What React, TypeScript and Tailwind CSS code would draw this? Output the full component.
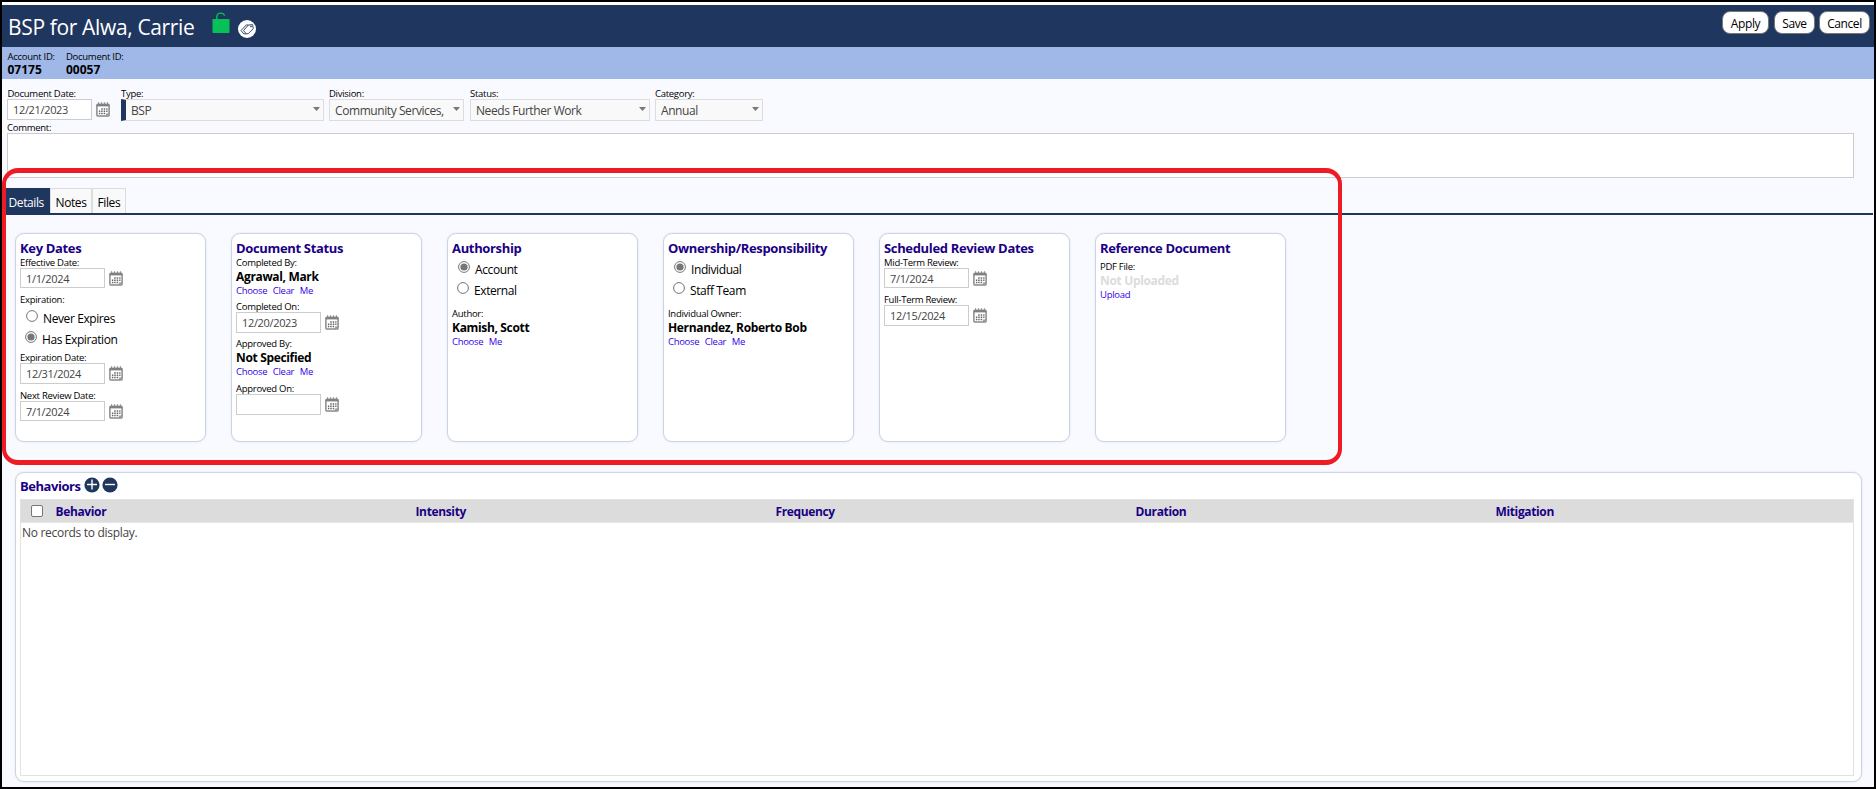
import type { ReactNode } from "react";

function CalendarIcon() {
  return (
    <svg width="14" height="15" viewBox="0 0 14 15" className="shrink-0">
      <rect x="0.9" y="2.4" width="12.2" height="11.7" rx="1.2" fill="#fff" stroke="#8a8a8a" strokeWidth="1.5" />
      <rect x="0.7" y="1.8" width="12.6" height="2.6" fill="#808080" />
      <path d="M2.5 0.3v2M5.5 0.3v2M8.5 0.3v2M11.5 0.3v2" stroke="#909090" strokeWidth="1.2" />
      <path d="M5.2 6.9h1.5M7.7 6.9h1.5M10.2 6.9h1.3M2.9 9.3h1.4M5.2 9.3h1.5M7.7 9.3h1.5M10.2 9.3h1.3M2.9 11.6h1.4M5.2 11.6h1.5M7.7 11.6h1.5" stroke="#666" strokeWidth="1.5" />
      <path d="M10.2 14.2v-2.8h3.2z" fill="#8a8a8a" />
    </svg>
  );
}

function LockIcon() {
  return (
    <svg width="18" height="21" viewBox="0 0 18 21">
      <rect x="0.5" y="7" width="17" height="14" rx="0.8" fill="#06c058" />
      <path d="M4.8 8V5.2C4.8 2.6 6.3 1.1 8.7 1.1c2 0 3.4 0.9 3.9 2.5" fill="none" stroke="#06c058" strokeWidth="1.4" />
    </svg>
  );
}

function TagIcon() {
  return (
    <svg width="18" height="18" viewBox="0 0 18 18">
      <circle cx="9" cy="9" r="9" fill="#fff" />
      <g fill="none" stroke="#1f365f" strokeWidth="0.9" strokeLinejoin="round">
        <path d="M5.6 10.6 10.4 5l4.2-.3.7 3.9-5.1 5.1-2 .1z" />
        <path d="M10.4 5 8.3 4.9 3 10.6l2.9 3.3 2.3-.1" />
        <circle cx="13" cy="6.5" r="0.5" />
      </g>
    </svg>
  );
}

function RoundIcon({ plus }: { plus?: boolean }) {
  return (
    <svg width="16" height="16" viewBox="0 0 16 16">
      <circle cx="8" cy="8" r="7.6" fill="#1f365f" />
      <path d={plus ? "M3 7.5h10M8 2.5v10" : "M3 7.5h10"} stroke="#fff" strokeWidth="1.4" />
    </svg>
  );
}

function Label({ children, className = "" }: { children: ReactNode; className?: string }) {
  return <div className={`h-3 whitespace-nowrap text-[9.5px] leading-[14px] tracking-[-0.28px] ${className}`}>{children}</div>;
}

function DateInput({ value = "", tall }: { value?: string; tall?: boolean }) {
  return (
    <div className="flex items-center gap-[4px]">
      <div
        className={`w-[85px] border border-[#ccc] bg-white pl-[5px] text-[11px] tracking-[-0.34px] text-[#444] ${
          tall ? "h-[21px] leading-5" : "h-5 leading-5"
        }`}
      >
        {value}
      </div>
      <CalendarIcon />
    </div>
  );
}

function Name({ children, muted }: { children: ReactNode; muted?: boolean }) {
  return (
    <div className={`h-4 whitespace-nowrap text-[12px] font-bold leading-[18px] tracking-[-0.34px] ${muted ? "text-[#dcdcdc]" : ""}`}>
      {children}
    </div>
  );
}

function Links({ items }: { items: string[] }) {
  return (
    <div className="flex h-3 gap-[5.5px] text-[9.5px] leading-[14px] tracking-[-0.3px] text-[#3300e6]">
      {items.map((item) => (
        <a key={item}>{item}</a>
      ))}
    </div>
  );
}

function Radio({ label, checked, indent = "pl-[5px]" }: { label: string; checked?: boolean; indent?: string }) {
  return (
    <div className={`flex h-[21px] gap-[5px] text-[12px] leading-[23px] tracking-[-0.4px] ${indent}`}>
      <svg width="12" height="12" viewBox="0 0 12 12" className="mt-[3px]">
        <circle cx="6" cy="6" r="5.4" fill="#fff" stroke="#767676" />
        {checked && <circle cx="6" cy="6" r="3.6" fill="#767676" />}
      </svg>
      <span>{label}</span>
    </div>
  );
}

function Card({ title, children }: { title: string; children: ReactNode }) {
  return (
    <section className="h-[209px] w-[191px] rounded-[9px] border border-[#ccd5e3] bg-white pl-1 pt-[5px] shadow-[0_0_2px_#d5deea]">
      <h2 className="h-[17px] whitespace-nowrap text-[13px] font-bold leading-[18px] tracking-[-0.34px] text-[#1a0084]">{title}</h2>
      {children}
    </section>
  );
}

function Select({ label, value, className, accent }: { label: string; value: string; className: string; accent?: boolean }) {
  return (
    <div className={className}>
      <Label>{label}</Label>
      <div
        className={`flex h-[22px] items-center justify-between border border-[#ddd] bg-[#f9f9f9] pl-[5px] pr-[3px] ${
          accent ? "border-l-[5px] border-l-[#1f365f]" : ""
        }`}
      >
        <span className="whitespace-nowrap pt-0.5 text-[12px] leading-5 tracking-[-0.42px] text-[#444]">{value}</span>
        <svg width="7" height="4" viewBox="0 0 7 4" className="-mt-0.5">
          <path d="M0 0h7L3.5 4z" fill="#777" />
        </svg>
      </div>
    </div>
  );
}

function HeaderButton({ children, className }: { children: ReactNode; className: string }) {
  return (
    <button
      className={`h-[23px] rounded-[8px] border border-[#777] bg-white pt-px text-[12px] leading-[21px] tracking-[-0.4px] text-black ${className}`}
    >
      {children}
    </button>
  );
}

export default function App() {
  return (
    <div className="relative flex h-[789px] w-[1876px] flex-col overflow-hidden border-2 border-black bg-[#f9faff] font-['Open_Sans',sans-serif] text-black">
      <header className="flex h-[45px] items-start justify-between border-t-[3px] border-white bg-[#1f365f] pr-[4px]">
        <div className="flex">
          <h1 className="ml-[6px] mt-[6px] w-[204px] whitespace-nowrap text-[21px] leading-[32px] tracking-[-0.35px] text-white">
            BSP for Alwa, Carrie
          </h1>
          <div className="mt-[7px]">
            <LockIcon />
          </div>
          <div className="ml-2 mt-[15px]">
            <TagIcon />
          </div>
        </div>
        <div className="mt-[6px] flex">
          <HeaderButton className="mr-[5px] w-[47px]">Apply</HeaderButton>
          <HeaderButton className="mr-[4px] w-[41px]">Save</HeaderButton>
          <HeaderButton className="w-[51px]">Cancel</HeaderButton>
        </div>
      </header>

      <div className="flex h-8 bg-[#9fb8e8] pl-[5.5px] pt-[3px]">
        <div className="w-[58.5px]">
          <Label>Account ID:</Label>
          <div className="text-[12px] font-bold leading-[16px]">07175</div>
        </div>
        <div>
          <Label>Document ID:</Label>
          <div className="text-[12px] font-bold leading-[16px]">00057</div>
        </div>
      </div>

      <div className="flex h-[42px] pl-[5px] pt-2">
        <div className="w-[114px]">
          <Label className="pl-[0.5px]">Document Date:</Label>
          <div className="-mr-px flex items-center">
            <DateInput value="12/21/2023" tall />
          </div>
        </div>
        <Select label="Type:" value="BSP" className="w-[203px]" accent />
        <Select label="Division:" value="Community Services," className="ml-[5px] w-[135px]" />
        <Select label="Status:" value="Needs Further Work" className="ml-[6px] w-[180px]" />
        <Select label="Category:" value="Annual" className="ml-[5px] w-[108px]" />
      </div>

      <Label className="pl-[5px]">Comment:</Label>
      <div className="ml-[5px] h-[45px] w-[1847px] shrink-0 border border-[#ccc] bg-white" />

      <nav className="mr-px mt-[10px] flex h-[27px] shrink-0 items-start border-b-2 border-[#1f365f] text-[12px] leading-[29px] tracking-[-0.4px]">
        <div className="h-[25px] w-12 bg-[#1f365f] pl-[6.5px] text-white">Details</div>
        <div className="h-[25px] w-[42px] border border-b-0 border-[#ddd] bg-[#f9f9f9] pl-[4.5px] leading-[27px]">Notes</div>
        <div className="h-[25px] w-[34px] border border-b-0 border-[#ddd] bg-[#f9f9f9] pl-[4.5px] leading-[27px]">Files</div>
      </nav>

      <main className="ml-[13px] mt-[18px] flex shrink-0 gap-[25px]">
        <Card title="Key Dates">
          <Label>Effective Date:</Label>
          <DateInput value="1/1/2024" />
          <Label className="mb-0.5 mt-[5px]">Expiration:</Label>
          <Radio label="Never Expires" indent="pl-[6px]" />
          <Radio label="Has Expiration" checked />
          <Label className="mt-0.5">Expiration Date:</Label>
          <DateInput value="12/31/2024" tall />
          <Label className="mt-[5px]">Next Review Date:</Label>
          <DateInput value="7/1/2024" />
        </Card>
        <Card title="Document Status">
          <Label>Completed By:</Label>
          <Name>Agrawal, Mark</Name>
          <Links items={["Choose", "Clear", "Me"]} />
          <Label className="mt-1">Completed On:</Label>
          <DateInput value="12/20/2023" tall />
          <Label className="mt-1">Approved By:</Label>
          <Name>Not Specified</Name>
          <Links items={["Choose", "Clear", "Me"]} />
          <Label className="mt-[5px]">Approved On:</Label>
          <DateInput tall />
        </Card>
        <Card title="Authorship">
          <div className="pb-[7px] pt-0.5">
            <Radio label="Account" checked indent="pl-[6px]" />
            <Radio label="External" />
          </div>
          <Label>Author:</Label>
          <Name>Kamish, Scott</Name>
          <Links items={["Choose", "Me"]} />
        </Card>
        <Card title="Ownership/Responsibility">
          <div className="pb-[7px] pt-0.5">
            <Radio label="Individual" checked indent="pl-[6px]" />
            <Radio label="Staff Team" />
          </div>
          <Label>Individual Owner:</Label>
          <Name>Hernandez, Roberto Bob</Name>
          <Links items={["Choose", "Clear", "Me"]} />
        </Card>
        <Card title="Scheduled Review Dates">
          <Label>Mid-Term Review:</Label>
          <DateInput value="7/1/2024" />
          <Label className="mt-[5px]">Full-Term Review:</Label>
          <DateInput value="12/15/2024" tall />
        </Card>
        <Card title="Reference Document">
          <Label className="mt-1">PDF File:</Label>
          <Name muted>Not Uploaded</Name>
          <Links items={["Upload"]} />
        </Card>
      </main>

      <section className="ml-[13px] mt-[30px] h-[310px] w-[1847px] shrink-0 rounded-[9px] border border-[#ccd5e3] bg-white pl-1 shadow-[0_0_2px_#d5deea]">
        <div className="flex h-[26px] items-start">
          <h2 className="mt-[5px] w-[63.5px] text-[13px] font-bold leading-[17px] tracking-[-0.45px] text-[#1a0084]">Behaviors</h2>
          <div className="mt-[3.5px] flex gap-0.5">
            <RoundIcon plus />
            <RoundIcon />
          </div>
        </div>
        <div className="h-[277px] w-[1834px] border border-[#e2e2e2]">
          <div className="flex h-[23px] items-center border-b border-[#e6e6e6] bg-[#dcdcdc] pl-[10px] text-[12px] font-bold tracking-[-0.36px] text-[#1a0084]">
            <div className="h-3 w-3 rounded-[2px] border border-[#767676] bg-white" />
            <div className="ml-[12.5px] w-[360px] pt-px">Behavior</div>
            <div className="w-[360px] pt-px">Intensity</div>
            <div className="w-[360px] pt-px">Frequency</div>
            <div className="w-[360px] pt-px">Duration</div>
            <div className="pt-px">Mitigation</div>
          </div>
          <div className="pl-[1px] text-[12px] leading-5 tracking-[-0.3px] text-[#444]">No records to display.</div>
        </div>
      </section>

      <div className="pointer-events-none absolute left-0 top-[166px] h-[297px] w-[1340px] rounded-[16px] border-x-[4px] border-y-[5px] border-[#ed1c24]" />
    </div>
  );
}
